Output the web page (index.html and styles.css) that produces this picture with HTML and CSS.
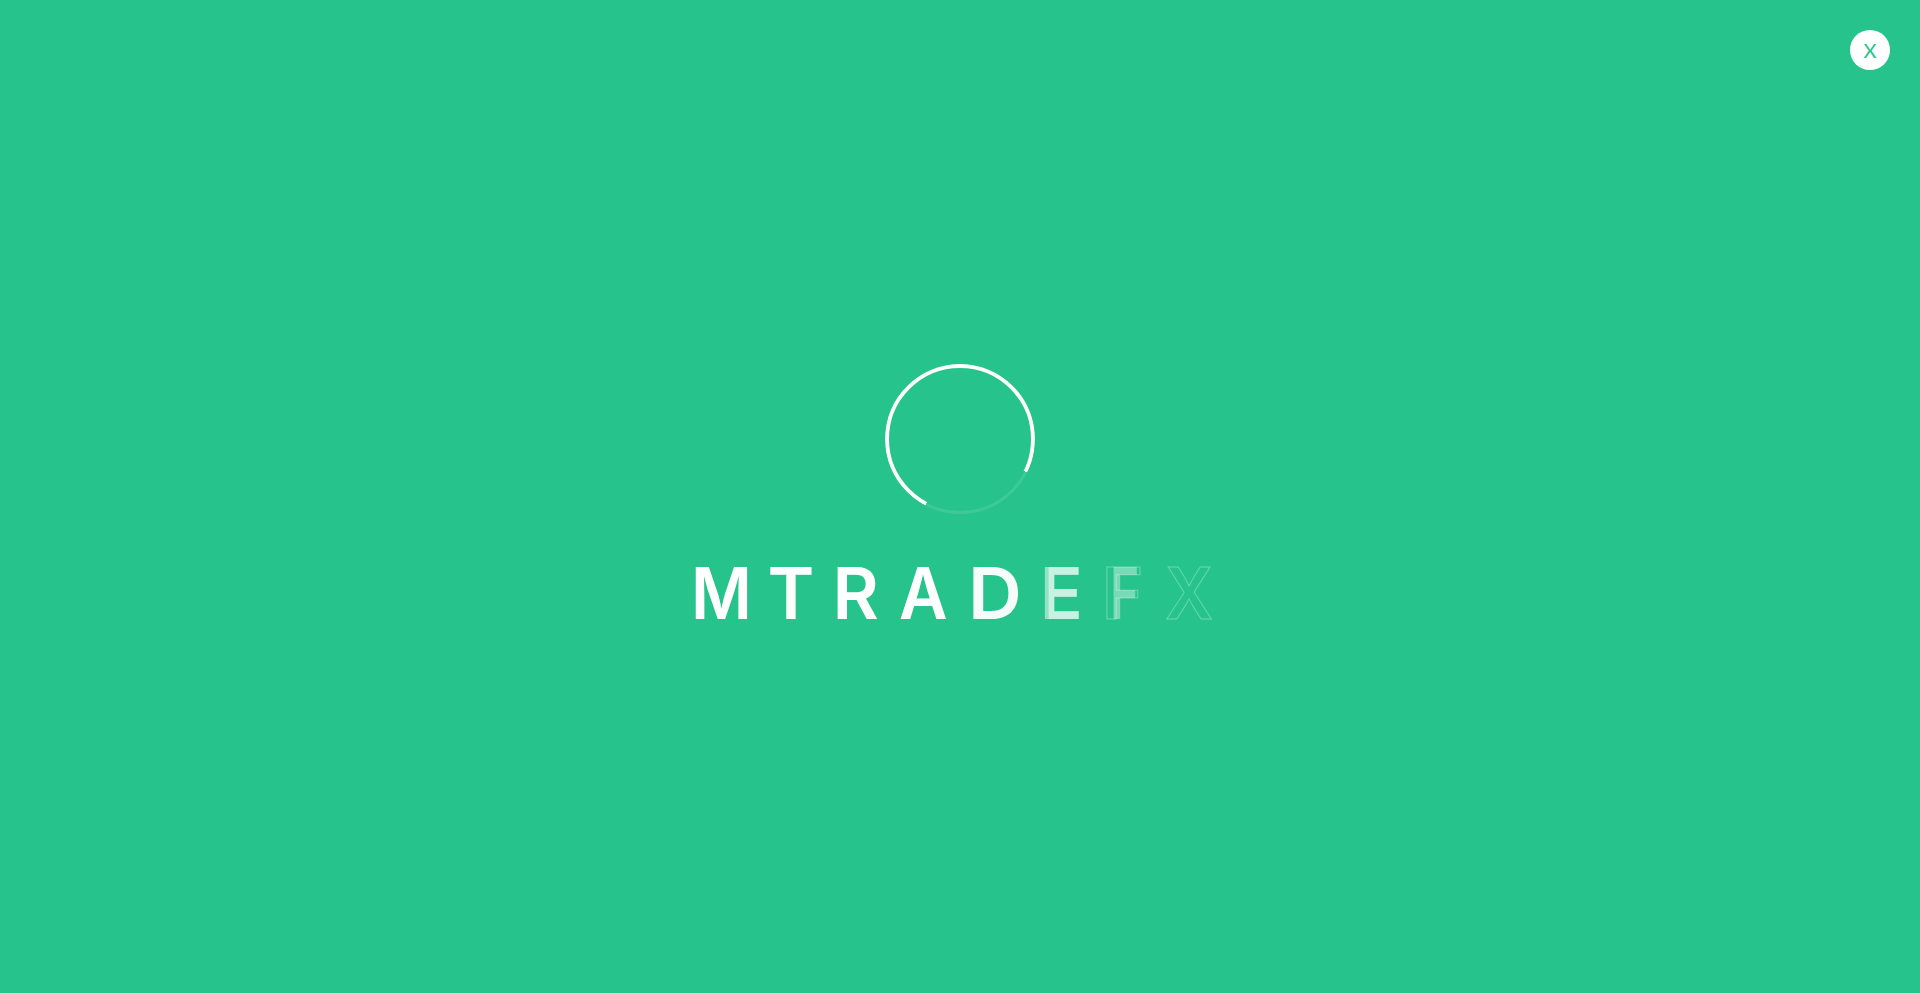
FILE: index.html
```html
<!DOCTYPE html>
<html lang="en">
<head>
<meta charset="utf-8">
<title>MTRADEFX</title>
<link rel="stylesheet" href="styles.css">
</head>
<body>
<main class="preloader">
  <button class="close" type="button">X</button>
  <div class="loader">
    <div class="spinner" aria-hidden="true"></div>
    <div class="word">
      <span class="ch m">M</span>
      <span class="ch t">T</span>
      <span class="ch r">R</span>
      <span class="ch a">A</span>
      <span class="ch d">D</span>
      <span class="ch e" data-c="E">E</span>
      <span class="ch f" data-c="F">F</span>
      <span class="ch x">X</span>
    </div>
  </div>
</main>
</body>
</html>
```
FILE: styles.css
```css
* { box-sizing: border-box; }
html, body { margin: 0; height: 100%; }
body { background: #26c48c; font-family: "Inter", "Liberation Sans", sans-serif; overflow: hidden; }
.preloader { position: relative; height: 993px; display: flex; justify-content: center; padding-top: 364px; }
.close {
  position: absolute; top: 30px; right: 30px;
  width: 40px; height: 40px; border: 0; padding: 0; border-radius: 50%;
  background: #fff; color: #26c48c;
  font: 400 20px/40px "Lato", sans-serif;
}
.loader { display: flex; flex-direction: column; align-items: center; }
.spinner { position: relative; width: 150px; height: 150px; border-radius: 50%; border: 3px solid #3fc999; }
.spinner::before {
  content: ""; position: absolute; inset: -3px; border-radius: 50%; border: 4px solid #fff;
  -webkit-mask-image: conic-gradient(from 207.6deg, #000 0 269deg, transparent 269deg);
  mask-image: conic-gradient(from 207.6deg, #000 0 269deg, transparent 269deg);
}
.word { display: flex; margin-top: 37px; width: 534px; height: 86px; font-size: 71px; line-height: 85px; font-weight: 600; color: #fff; }
.ch { position: relative; display: block; }
.m { margin-left: -2px; margin-right: -4px; transform: scaleX(.93); transform-origin: left center; }
.t { margin-left: 15px; }
.r { margin-left: 18px; }
.a { margin-left: 20px; margin-right: -3px; transform: scaleX(.94); transform-origin: left center; }
.d { margin-left: 21px; opacity: .96; transform: scaleX(1.05); transform-origin: left center; }
.e { margin-left: 20px; color: rgba(255,255,255,.5); }
.e::after { content: attr(data-c); position: absolute; left: 0; top: 0; color: rgba(255,255,255,.5); clip-path: inset(0 0 0 9px); }
.f { margin-left: 19px; color: transparent; -webkit-text-stroke: 1px rgba(255,255,255,.3); }
.f::after { content: attr(data-c); position: absolute; left: 8px; top: 0; color: rgba(255,255,255,.38); -webkit-text-stroke: 0; transform: scaleX(.7); transform-origin: left center; }
.x { margin-left: 22px; margin-right: -3px; color: transparent; -webkit-text-stroke: 1px rgba(255,255,255,.3); transform: scaleX(.94); transform-origin: left center; }
```
